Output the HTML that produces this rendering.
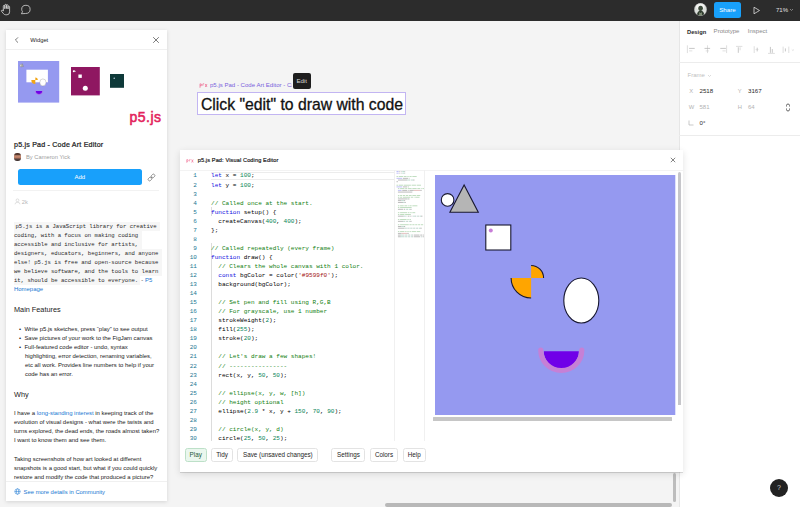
<!DOCTYPE html>
<html><head><meta charset="utf-8">
<style>
*{box-sizing:border-box;margin:0;padding:0}
html,body{width:800px;height:507px;overflow:hidden;background:#f4f4f4;font-family:"Liberation Sans",sans-serif;position:relative}
.a{position:absolute;white-space:nowrap}
#top{left:0;top:0;width:800px;height:21px;background:#2c2c2c}
#rp{left:679px;top:21px;width:121px;height:486px;background:#fff;box-shadow:inset 1px 0 0 #e6e6e6}
#wp{left:6px;top:30px;width:161px;height:471px;background:#fff;box-shadow:0 1px 4px rgba(0,0,0,.13)}
#md{left:180px;top:150px;width:503px;height:322px;background:#fff;box-shadow:0 0.5px 0.5px rgba(0,0,0,.12),0 2px 7px rgba(0,0,0,.12)}
.mono{font-family:"Liberation Mono",monospace}
.rt{font-size:6.15px;color:#2a2a2a}
.rg{color:#b3b3b3}
.btn{top:298.3px;height:13.6px;border:0.6px solid #e3e3e3;border-radius:2.5px;font-size:6.3px;line-height:12.4px;text-align:center;color:#1e1e1e;background:#fff}
.ln{left:0;width:17px;text-align:right;font-family:"Liberation Mono",monospace;font-size:6.05px;line-height:9.05px;color:#237893}
.cl{left:31px;font-family:"Liberation Mono",monospace;font-size:6.05px;line-height:9.05px}
</style></head><body>
<div id="top" class="a">
  <svg class="a" style="left:0;top:0" width="40" height="21" viewBox="0 0 40 21">
    <g fill="none" stroke="#d8d8d8" stroke-width="0.8" stroke-linejoin="round" stroke-linecap="round">
      <path d="M3.3 10 V6.2 Q3.3 5.4 4.05 5.4 Q4.8 5.4 4.8 6.2 V8.6 M4.8 8.2 V5.1 Q4.8 4.4 5.6 4.4 Q6.4 4.4 6.4 5.1 V8.2 M6.4 8.2 V5.4 Q6.4 4.7 7.2 4.7 Q8 4.7 8 5.4 V8.6 M8 8.6 V6.8 Q8 6.1 8.8 6.1 Q9.6 6.1 9.6 6.8 V11.8 Q9.6 14.8 7 14.8 H5.8 Q4.4 14.8 3.5 13.7 L1.4 11.1 Q1.1 10.5 1.7 10.3 Q2.4 10.1 3.3 11 V10"/>
      <path d="M21.6 13.4 L22.5 11.7 Q21.7 10.6 21.7 9.3 Q21.7 5.3 25.9 5.3 Q30.1 5.3 30.1 9.4 Q30.1 13.5 25.9 13.5 Z"/>
    </g>
  </svg>
  <svg class="a" style="left:693.8px;top:3.4px" width="13" height="13" viewBox="0 0 13 13"><defs><clipPath id="avc"><circle cx="6.5" cy="6.5" r="6.2"/></clipPath></defs><g clip-path="url(#avc)"><rect width="13" height="13" fill="#dcdfdb"/><circle cx="6.2" cy="2.5" r="4.5" fill="#f4f4f2"/><ellipse cx="6.6" cy="5.3" rx="2.3" ry="2.6" fill="#3c4a3a"/><path d="M2.8 13 Q3 8 6.6 7.6 Q10.2 8 10.4 13 Z" fill="#2f3b2e"/><path d="M5.2 9 Q6.6 11 8 9 L8 13 L5.2 13 Z" fill="#7d8a72"/></g><circle cx="6.5" cy="6.5" r="6.2" fill="none" stroke="#aaa" stroke-width="0.4"/></svg>
  <div class="a" style="left:714px;top:2px;width:27px;height:16px;border-radius:2.5px;background:#18a0fb;color:#fff;font-size:6.2px;line-height:16px;text-align:center">Share</div>
  <svg class="a" style="left:752px;top:6px" width="9" height="9" viewBox="0 0 9 9"><path d="M2 1.2 L7.5 4.5 L2 7.8 Z" fill="none" stroke="#ddd" stroke-width="0.8" stroke-linejoin="round"/></svg>
  <div class="a" style="left:776px;top:5.8px;font-size:6.05px;color:#e0e0e0;line-height:8px">71%</div>
  <svg class="a" style="left:789px;top:8px" width="5" height="4" viewBox="0 0 5 4"><path d="M1 1 L2.5 2.5 L4 1" fill="none" stroke="#bbb" stroke-width="0.6"/></svg>
</div>

<div id="rp" class="a">
  <div class="a" style="left:8.0px;top:7.6px;font-size:5.75px;font-weight:bold;color:#2a2a2a">Design</div>
  <div class="a" style="left:34.6px;top:7.4px;font-size:6.05px;color:#8a8a8a">Prototype</div>
  <div class="a" style="left:68.8px;top:7.4px;font-size:6.05px;color:#8a8a8a">Inspect</div>
  <svg class="a" style="left:0;top:22px" width="121" height="14" viewBox="0 0 121 14">
    <g fill="none" stroke="#c4c4c4" stroke-width="0.55">
      <path d="M8.4 2.3 V10.1"/><path d="M10.1 5.4 H15.7" stroke-width="0.75" stroke="#b4b4b4"/><path d="M10.1 7.9 H13.3"/>
      <path d="M28.5 2.3 V10.1"/><path d="M25.5 5.4 H31.1" stroke-width="0.75" stroke="#b4b4b4"/><path d="M26.7 7.9 H29.9"/>
      <path d="M47.6 2.3 V10.1"/><path d="M41.3 5.4 H46.9" stroke-width="0.75" stroke="#b4b4b4"/><path d="M43.5 7.9 H46.7"/>
      <path d="M57 3.4 H63.4"/><path d="M59.3 4.3 V9.8" stroke-width="0.75" stroke="#b4b4b4"/><path d="M61.1 4.3 V7.3"/>
      <path d="M75.2 3.2 V10"/><path d="M78.2 4.7 V8.4" stroke-width="0.75" stroke="#b4b4b4"/><path d="M76.5 6.5 H79.5" stroke-width="0.4"/>
      <path d="M89 10.4 H95.9"/><path d="M91.4 3.9 V9.8" stroke-width="0.75" stroke="#b4b4b4"/><path d="M93.3 6.1 V9.8" stroke-width="0.75" stroke="#b4b4b4"/>
      <path d="M104.1 3.6 V10"/><path d="M109.8 3.6 V10"/><path d="M106.4 5.4 V8.4" stroke-width="0.75" stroke="#b4b4b4"/>
      <path d="M112.8 6.5 L113.9 7.5 L115 6.5" stroke-width="0.5"/>
    </g>
  </svg>
  <div class="a" style="left:0;top:40.5px;width:121px;height:1px;background:#ececec"></div>
  <div class="a rg" style="left:8.5px;top:50.5px;font-size:6px;color:#c0c0c0">Frame</div>
  <svg class="a" style="left:28.0px;top:52.5px" width="5" height="4" viewBox="0 0 5 4"><path d="M1 1 L2.5 2.5 L4 1" fill="none" stroke="#c4c4c4" stroke-width="0.6"/></svg>
  <div class="a rg" style="left:10.3px;top:66.5px;font-size:5.8px">X</div>
  <div class="a rt" style="left:20.5px;top:65.9px">2518</div>
  <div class="a rg" style="left:58.8px;top:66.5px;font-size:5.8px">Y</div>
  <div class="a rt" style="left:69.0px;top:65.9px">3167</div>
  <div class="a rg" style="left:9.8px;top:82.5px;font-size:5.8px">W</div>
  <div class="a rg" style="left:20.5px;top:82.5px;font-size:6px">581</div>
  <div class="a rg" style="left:58.8px;top:82.5px;font-size:5.8px">H</div>
  <div class="a rg" style="left:69.0px;top:82.5px;font-size:6px">64</div>
  <svg class="a" style="left:105.0px;top:82px" width="8" height="9" viewBox="0 0 8 9"><path d="M2.5 3.5 V2.5 Q2.5 1 4 1 Q5.5 1 5.5 2.5 V3.5 M2.5 5.5 V6.5 Q2.5 8 4 8 Q5.5 8 5.5 6.5 V5.5" fill="none" stroke="#444" stroke-width="0.8"/></svg>
  <svg class="a" style="left:8.3px;top:98px" width="8" height="8" viewBox="0 0 8 8"><path d="M2 1.5 V6 H6.5" fill="none" stroke="#b3b3b3" stroke-width="0.7"/></svg>
  <div class="a rt" style="left:20.5px;top:97.9px">0°</div>
  <div class="a" style="left:0;top:114px;width:121px;height:1px;background:#ececec"></div>
</div>

<div class="a" style="left:197.3px;top:92.4px;width:208.4px;height:23px;background:#fff;border:0.75px solid #c2b5f2"></div>
<div class="a" style="left:201px;top:93.6px;font-size:15.75px;line-height:22px;color:#111;-webkit-text-stroke:0.3px #111">Click "edit" to draw with code</div>
<svg class="a" style="left:198.5px;top:82px" width="9" height="7" viewBox="0 0 9 7"><g fill="none" stroke="#ed225d" stroke-width="0.55" opacity=".85"><path d="M1 1.8 V5.8 M1 2 Q2.6 1.4 2.6 3 Q2.6 4.3 1 3.7"/><path d="M3.8 1.8 V3.8 M4 1.8 H5.2"/><path d="M6.2 2 L8 5 M8 2 L6.2 5"/></g></svg>
<div class="a" style="left:210px;top:81.1px;width:82px;overflow:hidden;font-size:6.05px;line-height:8px;color:#7a5fdc">p5.js Pad - Code Art Editor - Cameron Yick</div>
<div class="a" style="left:292.5px;top:72.7px;width:18.3px;height:16px;border-radius:2px;background:#1e1e1e;color:#d8d8d8;font-size:6.1px;line-height:15.4px;text-align:center">Edit</div>
<div class="a" style="left:673px;top:473px;width:3px;height:29px;border-radius:1.5px;background:#bdbdbd"></div>
<div class="a" style="left:385px;top:503.2px;width:287px;height:4px;border-radius:2px;background:#b8b8b8"></div>
<div id="wp" class="a">
  <svg class="a" style="left:7.2px;top:6px" width="8" height="8" viewBox="0 0 8 8"><path d="M5 1.4 L2.4 4 L5 6.6" fill="none" stroke="#333" stroke-width="0.65"/></svg>
  <div class="a" style="left:24.2px;top:5.5px;font-size:5.8px;line-height:8px;color:#222">Widget</div>
  <svg class="a" style="left:146px;top:5.5px" width="8" height="8" viewBox="0 0 8 8"><path d="M1.2 1.2 L6.8 6.8 M6.8 1.2 L1.2 6.8" fill="none" stroke="#444" stroke-width="0.7"/></svg>
  <div class="a" style="left:0;top:19px;width:161px;height:1px;background:#f0f0f0"></div>
  <!-- thumbnails -->
  <svg class="a" style="left:11.8px;top:31px" width="42" height="42" viewBox="0 0 42 42">
    <rect width="41.2" height="41.6" fill="#9599f0"/>
    <circle cx="3.2" cy="4.6" r="1.3" fill="#ddd" stroke="#777" stroke-width="0.3"/>
    <path d="M4.3 2.6 L3.2 5.6 H5.6 Z" fill="#aaa" stroke="#777" stroke-width="0.3"/>
    <rect x="8.4" y="8.7" width="21.5" height="12.6" fill="#fff"/>
    <path d="M17.3 19 L13.3 19 A4 4 0 0 0 17.3 23 Z" fill="#f2a516"/>
    <path d="M17.3 19 L17.3 16.5 A2.5 2.5 0 0 1 19.8 19 Z" fill="#f2a516"/>
    <ellipse cx="24.9" cy="21.4" rx="3.1" ry="3.5" fill="#fff" stroke="#777" stroke-width="0.3"/>
    <path d="M17.8 30 A3.2 3.2 0 0 0 24.2 30 Z" fill="#7000e8"/>
    <path d="M17.2 29.7 A3.8 3.8 0 0 0 24.8 29.7" fill="none" stroke="#b070e0" stroke-width="0.7"/>
  </svg>
  <svg class="a" style="left:64.8px;top:37.2px" width="29" height="29" viewBox="0 0 29 29">
    <rect width="28.8" height="28.4" fill="#8f1761"/>
    <circle cx="2.8" cy="4.3" r="1" fill="#fff"/>
    <path d="M3.6 3 L3.1 4.8 H5 Z" fill="#ddd"/>
    <rect x="7.4" y="7.5" width="3.4" height="3.4" fill="#fff"/>
    <circle cx="14.3" cy="21.3" r="2.5" fill="#fff"/>
  </svg>
  <svg class="a" style="left:104.4px;top:44.2px" width="14.1" height="14" viewBox="0 0 14.1 14">
    <rect width="14" height="13.8" fill="#0e3939"/>
    <circle cx="4.2" cy="4.2" r="0.7" fill="#cde"/>
  </svg>
  <div class="a" style="left:123.6px;top:78px;font-size:14px;line-height:18px;color:#e3245c;-webkit-text-stroke:0.55px #e3245c;letter-spacing:0.45px">p5.js</div>
  <!-- title -->
  <div class="a" style="left:8px;top:110.5px;font-size:7.1px;line-height:9px;color:#222;-webkit-text-stroke:0.22px #222;letter-spacing:0.2px">p5.js Pad - Code Art Editor</div>
  <div class="a" style="left:8.4px;top:123px;width:6.2px;height:7.6px;border-radius:3px;background:linear-gradient(#4a302a 0,#5a3a30 22%,#c98f75 35%,#b87a62 60%,#5b4440 75%,#3a3030 100%)"></div>
  <div class="a" style="left:20px;top:123px;font-size:5.75px;line-height:8px;color:#a0a0a0">By Cameron Yick</div>
  <div class="a" style="left:11.6px;top:138.9px;width:124.5px;height:16.1px;border-radius:2.5px;background:#18a0fb;color:#fff;font-size:6px;line-height:16.1px;text-align:center">Add</div>
  <svg class="a" style="left:141px;top:142.5px" width="9" height="9" viewBox="0 0 9 9"><g fill="none" stroke="#555" stroke-width="0.6" transform="rotate(-45 4.5 4.5)"><rect x="0.4" y="3.1" width="3.8" height="2.8" rx="1.2"/><rect x="4.8" y="3.1" width="3.8" height="2.8" rx="1.2"/><path d="M3.6 4.5 H5.4" stroke-width="0.5"/></g></svg>
  <div class="a" style="left:7px;top:160px;width:146px;height:1px;background:#f2f2f2"></div>
  <svg class="a" style="left:8px;top:167.5px" width="7" height="7" viewBox="0 0 7 7"><g fill="none" stroke="#c8c8c8" stroke-width="0.55"><circle cx="3.5" cy="2.3" r="1.4"/><path d="M1 6.3 Q1 4.3 3.5 4.3 Q6 4.3 6 6.3"/></g></svg>
  <div class="a" style="left:15.8px;top:167.5px;font-size:5.8px;line-height:8px;color:#b8b8b8">2k</div>
  <!-- mono paragraph -->
  <div class="a mono" style="left:8px;top:191.9px;font-size:5.6px;line-height:9px;color:#2a2a2a">
    <span style="background:#f6f6f6;padding:1px 0 1.5px 1.5px">p5.js is a JavaScript library for creative&nbsp;</span><br>
    <span style="background:#f6f6f6;padding:1px 0 1.5px 0">coding, with a focus on making coding&nbsp;</span><br>
    <span style="background:#f6f6f6;padding:1px 0 1.5px 0">accessible and inclusive for artists,&nbsp;</span><br>
    <span style="background:#f6f6f6;padding:1px 0 1.5px 0">designers, educators, beginners, and anyone&nbsp;</span><br>
    <span style="background:#f6f6f6;padding:1px 0 1.5px 0">else! p5.js is free and open-source because&nbsp;</span><br>
    <span style="background:#f6f6f6;padding:1px 0 1.5px 0">we believe software, and the tools to learn&nbsp;</span><br>
    <span style="background:#f6f6f6;padding:1px 1.5px 1.5px 0">it, should be accessible to everyone.</span><span style="font-family:'Liberation Sans',sans-serif;font-size:5.95px;color:#333"> - </span><span style="font-family:'Liberation Sans',sans-serif;font-size:5.95px;color:#1877d2">P5</span><br>
    <span style="font-family:'Liberation Sans',sans-serif;font-size:5.95px;color:#1877d2">Homepage</span>
  </div>
  <div class="a" style="left:8px;top:274.5px;font-size:7.3px;line-height:9px;color:#222">Main Features</div>
  <div class="a" style="left:13px;top:294.5px;font-size:5.95px;line-height:9.05px;color:#222">
    <div>•&nbsp; Write p5.js sketches, press “play” to see output</div>
    <div>•&nbsp; Save pictures of your work to the FigJam canvas</div>
    <div>•&nbsp; Full-featured code editor - undo, syntax</div>
    <div style="padding-left:6px">highlighting, error detection, renaming variables,</div>
    <div style="padding-left:6px">etc all work. Provides line numbers to help if your</div>
    <div style="padding-left:6px">code has an error.</div>
  </div>
  <div class="a" style="left:8px;top:359.5px;font-size:7.3px;line-height:9px;color:#222">Why</div>
  <div class="a" style="left:8px;top:378.5px;font-size:5.95px;line-height:9.2px;color:#222">
    <div>I have a <span style="color:#1877d2">long-standing interest</span> in keeping track of the</div>
    <div>evolution of visual designs - what were the twists and</div>
    <div>turns explored, the dead ends, the roads almost taken?</div>
    <div>I want to know them and see them.</div>
    <div style="margin-top:9.2px">Taking screenshots of how art looked at different</div>
    <div>snapshots is a good start, but what if you could quickly</div>
    <div>restore and modify the code that produced a picture?</div>
  </div>
  <div class="a" style="left:0;top:451px;width:161px;height:20px;background:#fff;border-top:1px solid #f0f0f0"></div>
  <svg class="a" style="left:8px;top:458px" width="7" height="7" viewBox="0 0 7 7"><g fill="none" stroke="#1877d2" stroke-width="0.5"><circle cx="3.5" cy="3.5" r="2.7"/><ellipse cx="3.5" cy="3.5" rx="1.1" ry="2.7"/><path d="M0.8 3.5 H6.2"/></g></svg>
  <div class="a" style="left:17.6px;top:457.7px;font-size:5.86px;line-height:8px;color:#1877d2">See more details in Community</div>
</div>
<div id="md" class="a">
  <svg class="a" style="left:5.5px;top:7.5px" width="8" height="6" viewBox="0 0 8 6"><g fill="none" stroke="#ed225d" stroke-width="0.5" opacity=".8"><path d="M0.8 1.5 V4.8 M0.8 1.8 Q2.2 1.2 2.2 2.6 Q2.2 3.8 0.8 3.2"/><path d="M3.4 1.6 V3.4 M3.6 1.6 H4.6"/><path d="M5.6 1.5 L7.2 4.5 M7.2 1.5 L5.6 4.5"/></g></svg>
  <div class="a" style="left:17.7px;top:6.1px;font-size:5.6px;line-height:8px;color:#1a1a1a;-webkit-text-stroke:0.18px #1a1a1a;letter-spacing:0.12px">p5.js Pad: Visual Coding Editor</div>
  <svg class="a" style="left:489px;top:6px" width="8" height="8" viewBox="0 0 8 8"><path d="M1.8 1.8 L6.2 6.2 M6.2 1.8 L1.8 6.2" fill="none" stroke="#333" stroke-width="0.6"/></svg>
  <div class="a" style="left:0;top:19.5px;width:503px;height:1px;background:#f3f3f3"></div>
  <div class="a" style="left:30.5px;top:21.5px;width:183.5px;height:8.2px;border-top:0.7px solid #ececec;border-bottom:0.7px solid #ececec"></div>
  <div class="a" style="left:31px;top:57px;width:0.6px;height:9px;background:#dcdcdc"></div>
  <div class="a" style="left:31px;top:93px;width:0.6px;height:198px;background:#dcdcdc"></div>
  <div class="a" style="left:214px;top:20px;width:0.6px;height:271px;background:#f0f0f0"></div>
  <div class="a" style="left:244.3px;top:20px;width:0.6px;height:271px;background:#f0f0f0"></div>
  
  <svg class="a" style="left:214px;top:20px;opacity:.3" width="30" height="75" viewBox="0 0 30 75"><rect x="2.50" y="1.00" width="2.16" height="0.85" fill="#1010e0"/><rect x="5.38" y="1.00" width="0.72" height="0.85" fill="#000"/><rect x="6.82" y="1.00" width="0.72" height="0.85" fill="#000"/><rect x="8.26" y="1.00" width="2.16" height="0.85" fill="#098658"/><rect x="10.42" y="1.00" width="0.72" height="0.85" fill="#000"/><rect x="2.50" y="2.72" width="2.16" height="0.85" fill="#1010e0"/><rect x="5.38" y="2.72" width="0.72" height="0.85" fill="#000"/><rect x="6.82" y="2.72" width="0.72" height="0.85" fill="#000"/><rect x="8.26" y="2.72" width="2.16" height="0.85" fill="#098658"/><rect x="10.42" y="2.72" width="0.72" height="0.85" fill="#000"/><rect x="2.50" y="6.16" width="1.44" height="0.85" fill="#108010"/><rect x="4.66" y="6.16" width="4.32" height="0.85" fill="#108010"/><rect x="9.70" y="6.16" width="2.88" height="0.85" fill="#108010"/><rect x="13.30" y="6.16" width="1.44" height="0.85" fill="#108010"/><rect x="15.46" y="6.16" width="2.16" height="0.85" fill="#108010"/><rect x="18.34" y="6.16" width="4.32" height="0.85" fill="#108010"/><rect x="2.50" y="7.88" width="5.76" height="0.85" fill="#1010e0"/><rect x="8.98" y="7.88" width="5.04" height="0.85" fill="#000"/><rect x="14.74" y="7.88" width="0.72" height="0.85" fill="#000"/><rect x="3.94" y="9.60" width="9.36" height="0.85" fill="#000"/><rect x="13.30" y="9.60" width="2.16" height="0.85" fill="#098658"/><rect x="15.46" y="9.60" width="0.72" height="0.85" fill="#000"/><rect x="16.90" y="9.60" width="2.16" height="0.85" fill="#098658"/><rect x="19.06" y="9.60" width="1.44" height="0.85" fill="#000"/><rect x="2.50" y="11.32" width="1.44" height="0.85" fill="#000"/><rect x="2.50" y="14.76" width="1.44" height="0.85" fill="#108010"/><rect x="4.66" y="14.76" width="4.32" height="0.85" fill="#108010"/><rect x="9.70" y="14.76" width="7.20" height="0.85" fill="#108010"/><rect x="17.62" y="14.76" width="4.32" height="0.85" fill="#108010"/><rect x="22.66" y="14.76" width="4.32" height="0.85" fill="#108010"/><rect x="2.50" y="16.48" width="5.76" height="0.85" fill="#1010e0"/><rect x="8.98" y="16.48" width="4.32" height="0.85" fill="#000"/><rect x="14.02" y="16.48" width="0.72" height="0.85" fill="#000"/><rect x="3.94" y="18.20" width="1.44" height="0.85" fill="#108010"/><rect x="6.10" y="18.20" width="4.32" height="0.85" fill="#108010"/><rect x="11.14" y="18.20" width="2.16" height="0.85" fill="#108010"/><rect x="14.02" y="18.20" width="3.60" height="0.85" fill="#108010"/><rect x="18.34" y="18.20" width="4.32" height="0.85" fill="#108010"/><rect x="23.38" y="18.20" width="2.88" height="0.85" fill="#108010"/><rect x="26.98" y="18.20" width="0.72" height="0.85" fill="#108010"/><rect x="28.42" y="18.20" width="4.32" height="0.85" fill="#108010"/><rect x="3.94" y="19.92" width="3.60" height="0.85" fill="#1010e0"/><rect x="8.26" y="19.92" width="5.04" height="0.85" fill="#000"/><rect x="14.02" y="19.92" width="0.72" height="0.85" fill="#000"/><rect x="15.46" y="19.92" width="4.32" height="0.85" fill="#000"/><rect x="19.78" y="19.92" width="6.48" height="0.85" fill="#a31515"/><rect x="26.26" y="19.92" width="1.44" height="0.85" fill="#000"/><rect x="3.94" y="21.64" width="14.40" height="0.85" fill="#000"/><rect x="3.94" y="25.08" width="1.44" height="0.85" fill="#108010"/><rect x="6.10" y="25.08" width="2.16" height="0.85" fill="#108010"/><rect x="8.98" y="25.08" width="2.16" height="0.85" fill="#108010"/><rect x="11.86" y="25.08" width="2.16" height="0.85" fill="#108010"/><rect x="14.74" y="25.08" width="2.88" height="0.85" fill="#108010"/><rect x="18.34" y="25.08" width="3.60" height="0.85" fill="#108010"/><rect x="22.66" y="25.08" width="3.60" height="0.85" fill="#108010"/><rect x="3.94" y="26.80" width="1.44" height="0.85" fill="#108010"/><rect x="6.10" y="26.80" width="2.16" height="0.85" fill="#108010"/><rect x="8.98" y="26.80" width="7.20" height="0.85" fill="#108010"/><rect x="16.90" y="26.80" width="2.16" height="0.85" fill="#108010"/><rect x="19.78" y="26.80" width="0.72" height="0.85" fill="#108010"/><rect x="21.22" y="26.80" width="4.32" height="0.85" fill="#108010"/><rect x="3.94" y="28.52" width="9.36" height="0.85" fill="#000"/><rect x="13.30" y="28.52" width="0.72" height="0.85" fill="#098658"/><rect x="14.02" y="28.52" width="1.44" height="0.85" fill="#000"/><rect x="3.94" y="30.24" width="3.60" height="0.85" fill="#000"/><rect x="7.54" y="30.24" width="2.16" height="0.85" fill="#098658"/><rect x="9.70" y="30.24" width="1.44" height="0.85" fill="#000"/><rect x="3.94" y="31.96" width="5.04" height="0.85" fill="#000"/><rect x="8.98" y="31.96" width="1.44" height="0.85" fill="#098658"/><rect x="10.42" y="31.96" width="1.44" height="0.85" fill="#000"/><rect x="3.94" y="35.40" width="1.44" height="0.85" fill="#108010"/><rect x="6.10" y="35.40" width="3.60" height="0.85" fill="#108010"/><rect x="10.42" y="35.40" width="2.88" height="0.85" fill="#108010"/><rect x="14.02" y="35.40" width="0.72" height="0.85" fill="#108010"/><rect x="15.46" y="35.40" width="2.16" height="0.85" fill="#108010"/><rect x="18.34" y="35.40" width="5.04" height="0.85" fill="#108010"/><rect x="3.94" y="37.12" width="1.44" height="0.85" fill="#108010"/><rect x="6.10" y="37.12" width="11.52" height="0.85" fill="#108010"/><rect x="3.94" y="38.84" width="5.04" height="0.85" fill="#000"/><rect x="9.70" y="38.84" width="1.44" height="0.85" fill="#000"/><rect x="11.86" y="38.84" width="1.44" height="0.85" fill="#098658"/><rect x="13.30" y="38.84" width="0.72" height="0.85" fill="#000"/><rect x="14.74" y="38.84" width="1.44" height="0.85" fill="#098658"/><rect x="16.18" y="38.84" width="1.44" height="0.85" fill="#000"/><rect x="3.94" y="42.28" width="1.44" height="0.85" fill="#108010"/><rect x="6.10" y="42.28" width="7.20" height="0.85" fill="#108010"/><rect x="14.02" y="42.28" width="1.44" height="0.85" fill="#108010"/><rect x="16.18" y="42.28" width="1.44" height="0.85" fill="#108010"/><rect x="18.34" y="42.28" width="2.88" height="0.85" fill="#108010"/><rect x="3.94" y="44.00" width="1.44" height="0.85" fill="#108010"/><rect x="6.10" y="44.00" width="4.32" height="0.85" fill="#108010"/><rect x="11.14" y="44.00" width="5.76" height="0.85" fill="#108010"/><rect x="3.94" y="45.72" width="5.76" height="0.85" fill="#000"/><rect x="9.70" y="45.72" width="2.16" height="0.85" fill="#098658"/><rect x="12.58" y="45.72" width="0.72" height="0.85" fill="#000"/><rect x="14.02" y="45.72" width="1.44" height="0.85" fill="#000"/><rect x="16.18" y="45.72" width="0.72" height="0.85" fill="#000"/><rect x="17.62" y="45.72" width="0.72" height="0.85" fill="#000"/><rect x="19.06" y="45.72" width="2.16" height="0.85" fill="#098658"/><rect x="21.22" y="45.72" width="0.72" height="0.85" fill="#000"/><rect x="22.66" y="45.72" width="1.44" height="0.85" fill="#098658"/><rect x="24.10" y="45.72" width="0.72" height="0.85" fill="#000"/><rect x="25.54" y="45.72" width="1.44" height="0.85" fill="#098658"/><rect x="26.98" y="45.72" width="1.44" height="0.85" fill="#000"/><rect x="3.94" y="49.16" width="1.44" height="0.85" fill="#108010"/><rect x="6.10" y="49.16" width="6.48" height="0.85" fill="#108010"/><rect x="13.30" y="49.16" width="1.44" height="0.85" fill="#108010"/><rect x="15.46" y="49.16" width="1.44" height="0.85" fill="#108010"/><rect x="3.94" y="50.88" width="5.04" height="0.85" fill="#000"/><rect x="8.98" y="50.88" width="1.44" height="0.85" fill="#098658"/><rect x="10.42" y="50.88" width="0.72" height="0.85" fill="#000"/><rect x="11.86" y="50.88" width="1.44" height="0.85" fill="#098658"/><rect x="13.30" y="50.88" width="0.72" height="0.85" fill="#000"/><rect x="14.74" y="50.88" width="1.44" height="0.85" fill="#098658"/><rect x="16.18" y="50.88" width="1.44" height="0.85" fill="#000"/><rect x="3.94" y="54.32" width="1.44" height="0.85" fill="#108010"/><rect x="6.10" y="54.32" width="8.64" height="0.85" fill="#108010"/><rect x="15.46" y="54.32" width="2.16" height="0.85" fill="#108010"/><rect x="18.34" y="54.32" width="2.16" height="0.85" fill="#108010"/><rect x="21.22" y="54.32" width="2.16" height="0.85" fill="#108010"/><rect x="24.10" y="54.32" width="2.16" height="0.85" fill="#108010"/><rect x="26.98" y="54.32" width="2.16" height="0.85" fill="#108010"/><rect x="3.94" y="56.04" width="3.60" height="0.85" fill="#000"/><rect x="7.54" y="56.04" width="2.16" height="0.85" fill="#098658"/><rect x="9.70" y="56.04" width="1.44" height="0.85" fill="#000"/><rect x="3.94" y="57.76" width="6.48" height="0.85" fill="#000"/><rect x="10.42" y="57.76" width="1.44" height="0.85" fill="#098658"/><rect x="11.86" y="57.76" width="0.72" height="0.85" fill="#000"/><rect x="13.30" y="57.76" width="1.44" height="0.85" fill="#098658"/><rect x="14.74" y="57.76" width="0.72" height="0.85" fill="#000"/><rect x="16.18" y="57.76" width="1.44" height="0.85" fill="#098658"/><rect x="17.62" y="57.76" width="0.72" height="0.85" fill="#000"/><rect x="19.06" y="57.76" width="1.44" height="0.85" fill="#098658"/><rect x="20.50" y="57.76" width="0.72" height="0.85" fill="#000"/><rect x="21.94" y="57.76" width="1.44" height="0.85" fill="#098658"/><rect x="23.38" y="57.76" width="0.72" height="0.85" fill="#000"/><rect x="24.82" y="57.76" width="1.44" height="0.85" fill="#098658"/><rect x="26.26" y="57.76" width="1.44" height="0.85" fill="#000"/><rect x="3.94" y="61.20" width="1.44" height="0.85" fill="#108010"/><rect x="6.10" y="61.20" width="4.32" height="0.85" fill="#108010"/><rect x="11.14" y="61.20" width="1.44" height="0.85" fill="#108010"/><rect x="13.30" y="61.20" width="1.44" height="0.85" fill="#108010"/><rect x="15.46" y="61.20" width="1.44" height="0.85" fill="#108010"/><rect x="17.62" y="61.20" width="4.32" height="0.85" fill="#108010"/><rect x="22.66" y="61.20" width="3.60" height="0.85" fill="#108010"/><rect x="3.94" y="62.92" width="3.60" height="0.85" fill="#000"/><rect x="7.54" y="62.92" width="5.76" height="0.85" fill="#a31515"/><rect x="13.30" y="62.92" width="1.44" height="0.85" fill="#000"/><rect x="3.94" y="64.64" width="2.88" height="0.85" fill="#000"/><rect x="6.82" y="64.64" width="2.16" height="0.85" fill="#098658"/><rect x="8.98" y="64.64" width="0.72" height="0.85" fill="#000"/><rect x="10.42" y="64.64" width="2.16" height="0.85" fill="#098658"/><rect x="12.58" y="64.64" width="0.72" height="0.85" fill="#000"/><rect x="14.02" y="64.64" width="1.44" height="0.85" fill="#098658"/><rect x="15.46" y="64.64" width="0.72" height="0.85" fill="#000"/><rect x="16.90" y="64.64" width="1.44" height="0.85" fill="#098658"/><rect x="18.34" y="64.64" width="0.72" height="0.85" fill="#000"/><rect x="19.78" y="64.64" width="5.76" height="0.85" fill="#000"/><rect x="26.26" y="64.64" width="2.16" height="0.85" fill="#000"/><rect x="29.14" y="64.64" width="4.32" height="0.85" fill="#000"/><rect x="3.94" y="66.36" width="2.88" height="0.85" fill="#000"/><rect x="6.82" y="66.36" width="2.16" height="0.85" fill="#098658"/><rect x="8.98" y="66.36" width="0.72" height="0.85" fill="#000"/><rect x="10.42" y="66.36" width="2.16" height="0.85" fill="#098658"/><rect x="12.58" y="66.36" width="0.72" height="0.85" fill="#000"/><rect x="14.02" y="66.36" width="1.44" height="0.85" fill="#098658"/><rect x="15.46" y="66.36" width="0.72" height="0.85" fill="#000"/><rect x="16.90" y="66.36" width="1.44" height="0.85" fill="#098658"/><rect x="18.34" y="66.36" width="0.72" height="0.85" fill="#000"/><rect x="19.78" y="66.36" width="6.48" height="0.85" fill="#000"/><rect x="26.98" y="66.36" width="0.72" height="0.85" fill="#098658"/><rect x="27.70" y="66.36" width="0.72" height="0.85" fill="#000"/><rect x="29.14" y="66.36" width="4.32" height="0.85" fill="#000"/></svg>
  <div class="a ln" style="top:21.48px">1</div><div class="a cl" style="top:21.48px"><span style="color:#1010e0">let</span><span style="color:#000">&nbsp;x&nbsp;=&nbsp;</span><span style="color:#098658">100</span><span style="color:#000">;</span></div>
<div class="a ln" style="top:30.53px">2</div><div class="a cl" style="top:30.53px"><span style="color:#1010e0">let</span><span style="color:#000">&nbsp;y&nbsp;=&nbsp;</span><span style="color:#098658">100</span><span style="color:#000">;</span></div>
<div class="a ln" style="top:39.58px">3</div><div class="a cl" style="top:39.58px"></div>
<div class="a ln" style="top:48.62px">4</div><div class="a cl" style="top:48.62px"><span style="color:#108010">//&nbsp;Called&nbsp;once&nbsp;at&nbsp;the&nbsp;start.</span></div>
<div class="a ln" style="top:57.68px">5</div><div class="a cl" style="top:57.68px"><span style="color:#1010e0">function</span><span style="color:#000">&nbsp;setup()&nbsp;{</span></div>
<div class="a ln" style="top:66.72px">6</div><div class="a cl" style="top:66.72px"><span style="color:#000">&nbsp;&nbsp;createCanvas(</span><span style="color:#098658">400</span><span style="color:#000">,&nbsp;</span><span style="color:#098658">400</span><span style="color:#000">);</span></div>
<div class="a ln" style="top:75.78px">7</div><div class="a cl" style="top:75.78px"><span style="color:#000">};</span></div>
<div class="a ln" style="top:84.83px">8</div><div class="a cl" style="top:84.83px"></div>
<div class="a ln" style="top:93.88px">9</div><div class="a cl" style="top:93.88px"><span style="color:#108010">//&nbsp;Called&nbsp;repeatedly&nbsp;(every&nbsp;frame)</span></div>
<div class="a ln" style="top:102.93px">10</div><div class="a cl" style="top:102.93px"><span style="color:#1010e0">function</span><span style="color:#000">&nbsp;draw()&nbsp;{</span></div>
<div class="a ln" style="top:111.97px">11</div><div class="a cl" style="top:111.97px"><span style="color:#108010">&nbsp;&nbsp;//&nbsp;Clears&nbsp;the&nbsp;whole&nbsp;canvas&nbsp;with&nbsp;1&nbsp;color.</span></div>
<div class="a ln" style="top:121.03px">12</div><div class="a cl" style="top:121.03px"><span style="color:#000">&nbsp;&nbsp;</span><span style="color:#1010e0">const</span><span style="color:#000">&nbsp;bgColor&nbsp;=&nbsp;color(</span><span style="color:#a31515">&#x27;#9599f0&#x27;</span><span style="color:#000">);</span></div>
<div class="a ln" style="top:130.08px">13</div><div class="a cl" style="top:130.08px"><span style="color:#000">&nbsp;&nbsp;background(bgColor);</span></div>
<div class="a ln" style="top:139.12px">14</div><div class="a cl" style="top:139.12px"></div>
<div class="a ln" style="top:148.18px">15</div><div class="a cl" style="top:148.18px"><span style="color:#108010">&nbsp;&nbsp;//&nbsp;Set&nbsp;pen&nbsp;and&nbsp;fill&nbsp;using&nbsp;R,G,B</span></div>
<div class="a ln" style="top:157.22px">16</div><div class="a cl" style="top:157.22px"><span style="color:#108010">&nbsp;&nbsp;//&nbsp;For&nbsp;grayscale,&nbsp;use&nbsp;1&nbsp;number</span></div>
<div class="a ln" style="top:166.28px">17</div><div class="a cl" style="top:166.28px"><span style="color:#000">&nbsp;&nbsp;strokeWeight(</span><span style="color:#098658">2</span><span style="color:#000">);</span></div>
<div class="a ln" style="top:175.33px">18</div><div class="a cl" style="top:175.33px"><span style="color:#000">&nbsp;&nbsp;fill(</span><span style="color:#098658">255</span><span style="color:#000">);</span></div>
<div class="a ln" style="top:184.38px">19</div><div class="a cl" style="top:184.38px"><span style="color:#000">&nbsp;&nbsp;stroke(</span><span style="color:#098658">20</span><span style="color:#000">);</span></div>
<div class="a ln" style="top:193.43px">20</div><div class="a cl" style="top:193.43px"></div>
<div class="a ln" style="top:202.47px">21</div><div class="a cl" style="top:202.47px"><span style="color:#108010">&nbsp;&nbsp;//&nbsp;Let&#x27;s&nbsp;draw&nbsp;a&nbsp;few&nbsp;shapes!</span></div>
<div class="a ln" style="top:211.53px">22</div><div class="a cl" style="top:211.53px"><span style="color:#108010">&nbsp;&nbsp;//&nbsp;----------------</span></div>
<div class="a ln" style="top:220.58px">23</div><div class="a cl" style="top:220.58px"><span style="color:#000">&nbsp;&nbsp;rect(x,&nbsp;y,&nbsp;</span><span style="color:#098658">50</span><span style="color:#000">,&nbsp;</span><span style="color:#098658">50</span><span style="color:#000">);</span></div>
<div class="a ln" style="top:229.62px">24</div><div class="a cl" style="top:229.62px"></div>
<div class="a ln" style="top:238.68px">25</div><div class="a cl" style="top:238.68px"><span style="color:#108010">&nbsp;&nbsp;//&nbsp;ellipse(x,&nbsp;y,&nbsp;w,&nbsp;[h])</span></div>
<div class="a ln" style="top:247.73px">26</div><div class="a cl" style="top:247.73px"><span style="color:#108010">&nbsp;&nbsp;//&nbsp;height&nbsp;optional</span></div>
<div class="a ln" style="top:256.78px">27</div><div class="a cl" style="top:256.78px"><span style="color:#000">&nbsp;&nbsp;ellipse(</span><span style="color:#098658">2.9</span><span style="color:#000">&nbsp;*&nbsp;x,&nbsp;y&nbsp;+&nbsp;</span><span style="color:#098658">150</span><span style="color:#000">,&nbsp;</span><span style="color:#098658">70</span><span style="color:#000">,&nbsp;</span><span style="color:#098658">90</span><span style="color:#000">);</span></div>
<div class="a ln" style="top:265.83px">28</div><div class="a cl" style="top:265.83px"></div>
<div class="a ln" style="top:274.88px">29</div><div class="a cl" style="top:274.88px"><span style="color:#108010">&nbsp;&nbsp;//&nbsp;circle(x,&nbsp;y,&nbsp;d)</span></div>
<div class="a ln" style="top:283.93px">30</div><div class="a cl" style="top:283.93px"><span style="color:#000">&nbsp;&nbsp;circle(</span><span style="color:#098658">25</span><span style="color:#000">,&nbsp;</span><span style="color:#098658">50</span><span style="color:#000">,&nbsp;</span><span style="color:#098658">25</span><span style="color:#000">);</span></div>
  <svg class="a" style="left:255.3px;top:24.8px" width="240.3" height="240" viewBox="0 0 240.3 240">
    <rect width="240.3" height="240" fill="#9599f0"/>
    <g transform="translate(0.8 0)" stroke-width="1.1">
    <rect x="50" y="50" width="25" height="25" fill="#fff" stroke="#181830"/>
    <circle cx="55" cy="55.5" r="2" fill="#c77dd7"/>
    <ellipse cx="145.5" cy="125.5" rx="17.5" ry="22.5" fill="#fff" stroke="#181830"/>
    <polygon points="28.3,9.9 14.1,37.2 42.5,37.2" fill="#b5b5b5" stroke="#181830"/>
    <circle cx="11.8" cy="24.9" r="6.3" fill="#fff" stroke="#181830"/>
    <path d="M95.3 103 L75.3 103 A20 20 0 0 0 95.3 123 Z" fill="#ffa500"/>
    <path d="M75.3 103 A20 20 0 0 0 95.3 123" fill="none" stroke="#181830"/>
    <path d="M95.3 103 L95.3 90.5 A12.5 12.5 0 0 1 107.8 103 Z" fill="#ffa500"/>
    <path d="M95.3 90.5 A12.5 12.5 0 0 1 107.8 103" fill="none" stroke="#181830"/>
    <path d="M108 176.3 A17.5 17.5 0 0 0 143 176.3 Z" fill="#7000e8"/>
    <path d="M105 175 A20.5 20.5 0 0 0 146 175" fill="none" stroke="#c680d6" stroke-width="5.2" stroke-linecap="round"/>
    </g>
  </svg>
  <div class="a" style="left:498px;top:22.3px;width:3.2px;height:233px;border-radius:1.6px 1.6px 0 0;background:#c6c6ca"></div>
  <div class="a" style="left:253px;top:267.3px;width:239px;height:3.3px;border-radius:0.5px;background:#c6c6c6"></div>
  <div class="a btn" style="left:4.5px;width:22.4px;background:#eaf7ee;border-color:#bde0c8;color:#24583a">Play</div>
  <div class="a btn" style="left:31px;width:22.2px">Tidy</div>
  <div class="a btn" style="left:57.3px;width:81.1px">Save (unsaved changes)</div>
  <div class="a btn" style="left:151.4px;width:34.1px">Settings</div>
  <div class="a btn" style="left:189.7px;width:28.6px">Colors</div>
  <div class="a btn" style="left:223px;width:22.6px">Help</div>
</div><!--MDEND-->
<div class="a" style="left:770px;top:479px;width:18px;height:18px;border-radius:50%;background:#222;color:#d0d0d0;font-size:7px;line-height:18px;text-align:center">?</div>

</body></html>
